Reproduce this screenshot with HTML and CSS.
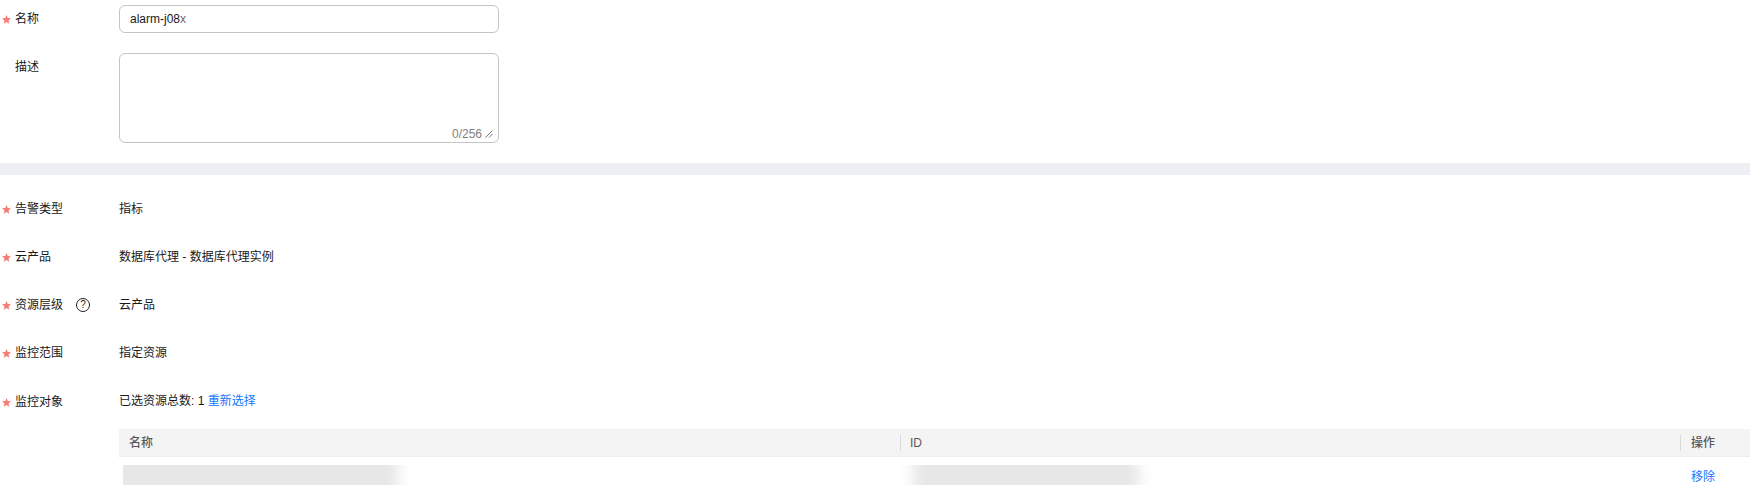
FILE: index.html
```html
<!DOCTYPE html>
<html lang="zh">
<head>
<meta charset="utf-8">
<title>告警规则</title>
<link rel="stylesheet" href="styles.css">
</head>
<body>
<section class="basic">
  <div class="row row-input">
    <div class="label"><svg class="star" viewBox="0 0 8 8"><polygon points="4,0 5.1,2.7 8,2.9 5.8,4.8 6.5,7.8 4,6.2 1.5,7.8 2.2,4.8 0,2.9 2.9,2.7"/></svg><span>名称</span></div>
    <div class="input"><span>alarm-j08</span><span class="fade">x</span></div>
  </div>
  <div class="row row-area">
    <div class="label"><span>描述</span></div>
    <div class="area">
      <span class="count">0/256</span>
      <svg class="grip" viewBox="0 0 8 8"><path d="M0.5 7.5 L7.5 0.5 M4 7.5 L7.5 4"/></svg>
    </div>
  </div>
</section>
<div class="band"></div>
<section class="detail">
  <div class="row-text">
    <div class="label"><svg class="star" viewBox="0 0 8 8"><polygon points="4,0 5.1,2.7 8,2.9 5.8,4.8 6.5,7.8 4,6.2 1.5,7.8 2.2,4.8 0,2.9 2.9,2.7"/></svg><span>告警类型</span></div>
    <div class="value">指标</div>
  </div>
  <div class="row-text">
    <div class="label"><svg class="star" viewBox="0 0 8 8"><polygon points="4,0 5.1,2.7 8,2.9 5.8,4.8 6.5,7.8 4,6.2 1.5,7.8 2.2,4.8 0,2.9 2.9,2.7"/></svg><span>云产品</span></div>
    <div class="value">数据库代理 - 数据库代理实例</div>
  </div>
  <div class="row-text">
    <div class="label"><svg class="star" viewBox="0 0 8 8"><polygon points="4,0 5.1,2.7 8,2.9 5.8,4.8 6.5,7.8 4,6.2 1.5,7.8 2.2,4.8 0,2.9 2.9,2.7"/></svg><span>资源层级</span><span class="help">?</span></div>
    <div class="value">云产品</div>
  </div>
  <div class="row-text">
    <div class="label"><svg class="star" viewBox="0 0 8 8"><polygon points="4,0 5.1,2.7 8,2.9 5.8,4.8 6.5,7.8 4,6.2 1.5,7.8 2.2,4.8 0,2.9 2.9,2.7"/></svg><span>监控范围</span></div>
    <div class="value">指定资源</div>
  </div>
  <div class="row-text row-last">
    <div class="label"><svg class="star" viewBox="0 0 8 8"><polygon points="4,0 5.1,2.7 8,2.9 5.8,4.8 6.5,7.8 4,6.2 1.5,7.8 2.2,4.8 0,2.9 2.9,2.7"/></svg><span>监控对象</span></div>
    <div class="value">已选资源总数: 1 <a class="link" href="#">重新选择</a></div>
  </div>
  <div class="table">
    <div class="thead">
      <div class="cell c-name">名称</div>
      <div class="cell c-id"><i class="sep"></i>ID</div>
      <div class="cell c-op"><i class="sep"></i>操作</div>
    </div>
    <div class="tbody">
      <div class="cell c-name"><div class="blur blur-name"><div class="smear"></div></div></div>
      <div class="cell c-id"><div class="blur blur-id"><div class="smear"></div></div></div>
      <div class="cell c-op"><a class="link" href="#">移除</a></div>
    </div>
  </div>
</section>
</body>
</html>
```
FILE: styles.css
```css
* { box-sizing: border-box; }
html, body { margin: 0; padding: 0; }
body {
  height: 495px;
  overflow: hidden;
  background: #fff;
  color: #191919;
  font: 12px/20px "Liberation Sans", "Noto Sans CJK SC", sans-serif;
}
.basic { padding-top: 5px; height: 163px; }
.row, .row-text { display: flex; }
.row-area { margin-top: 20px; }
.label {
  flex: 0 0 119px;
  display: flex;
  align-items: flex-start;
  padding-left: 15px;
  position: relative;
}
.star {
  position: absolute;
  left: 2px;
  top: 6px;
  width: 9px;
  height: 9px;
  fill: #f77b76;
}
.row-input .label { padding-top: 4px; }
.row-input .star { top: 10px; }
.row-area .label { padding-top: 4px; }
.input {
  width: 380px;
  height: 28px;
  padding: 0 10px;
  border: 1px solid #c4c4c4;
  border-radius: 6px;
  line-height: 26px;
}
.fade { color: #6b6b6b; }
.area {
  width: 380px;
  height: 90px;
  border: 1px solid #c4c4c4;
  border-radius: 6px;
  display: flex;
  justify-content: flex-end;
  align-items: flex-end;
  padding: 0 5px 0 0;
  color: #808080;
}
.count { line-height: 16px; margin-right: 3px; }
.grip {
  width: 8px;
  height: 8px;
  margin-bottom: 4px;
  fill: none;
  stroke: #777;
  stroke-width: 1;
}
.band { height: 12px; background: #eeeff4; }
.detail { padding-top: 24px; }
.row-text { height: 20px; margin-bottom: 28px; }
.row-last { margin-bottom: 18px; }
.row-last .label { padding-top: 1px; }
.row-last .star { top: 7px; }
.help {
  width: 14px;
  height: 14px;
  margin: 3px 0 0 13px;
  border: 1px solid #222;
  border-radius: 50%;
  color: #222;
  font-size: 10px;
  line-height: 12px;
  text-align: center;
}
.link { color: #1476ff; text-decoration: none; }
.table { margin-left: 119px; }
.thead, .tbody { display: flex; }
.thead {
  height: 28px;
  background: #f4f4f4;
  border-bottom: 1px solid #ececec;
  color: #575757;
  font-weight: 500;
  align-items: center;
}
.tbody { height: 38px; padding-top: 8px; align-items: flex-start; }
.cell { position: relative; padding-left: 10px; }
.c-name { flex: 0 0 781px; }
.c-id { flex: 0 0 780px; }
.c-op { flex: 1; padding-left: 11px; }
.tbody .c-name, .tbody .c-id { padding-left: 0; }
.tbody .c-op .link { position: relative; top: 2px; }
.sep {
  position: absolute;
  left: 0;
  top: 2px;
  width: 1px;
  height: 16px;
  background: #d9d9d9;
}
.blur { height: 20px; overflow: hidden; }
.smear {
  height: 40px;
  margin-top: -10px;
  background: #e7e7e7;
  filter: blur(7px);
}
.blur-name { width: 295px; margin-left: 4px; }
.blur-name .smear { margin-left: -20px; margin-right: 20px; }
.blur-id { width: 262px; margin-left: -5px; }
.blur-id .smear { margin-left: 18px; margin-right: 18px; }
```
